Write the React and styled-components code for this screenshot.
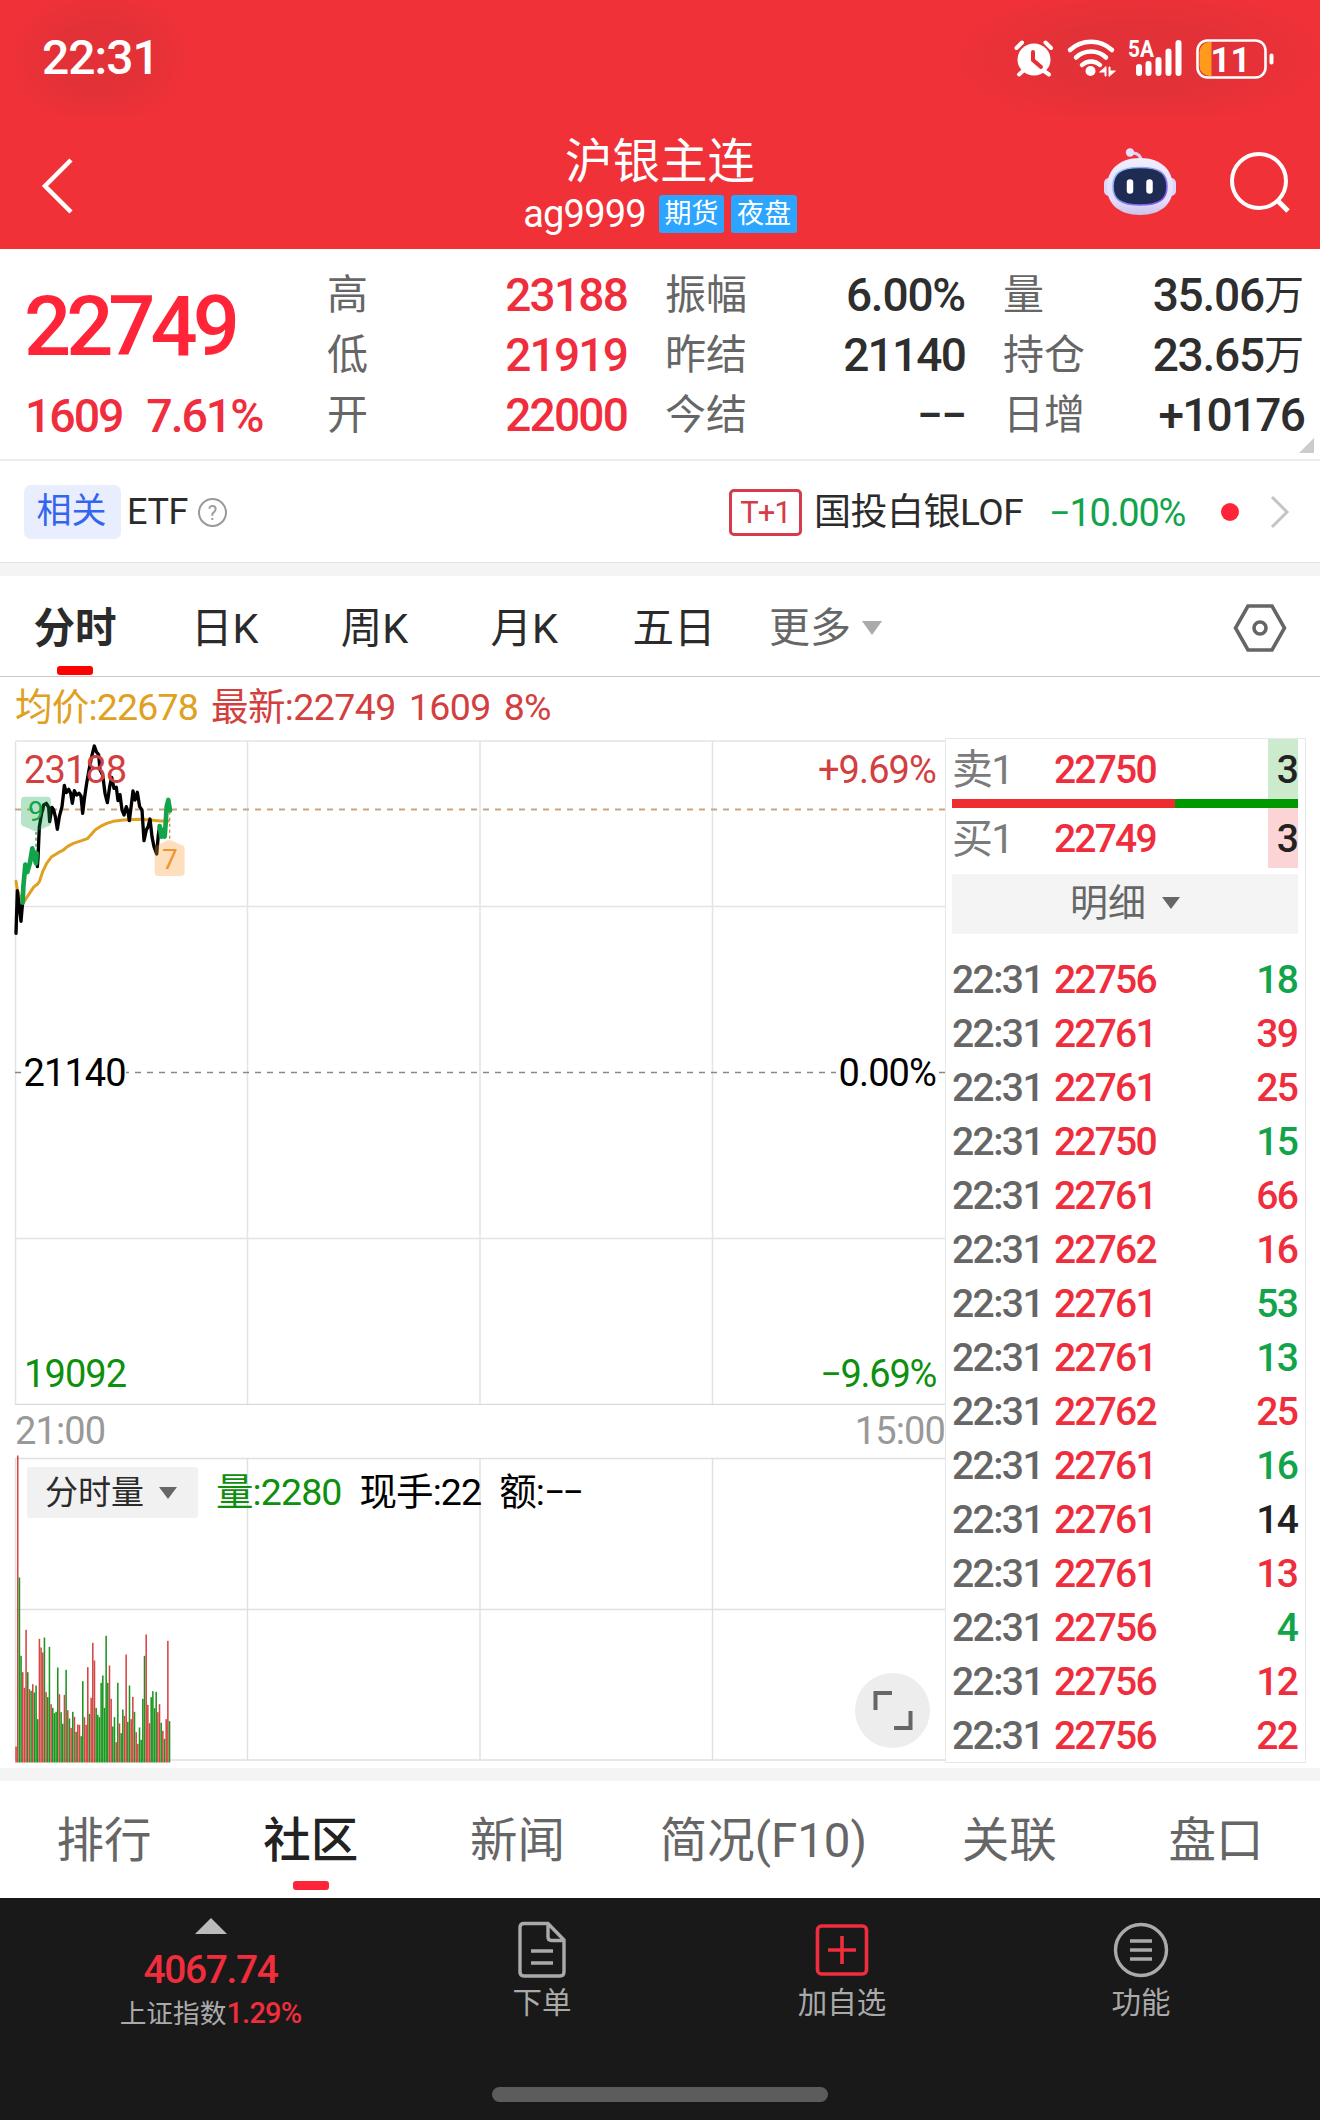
import React from 'react';
import styled, { createGlobalStyle } from 'styled-components';

const GlobalStyle = createGlobalStyle`
	body {
		background: #fff;
		color: #2b2b2b;
		font-family: Roboto, "Noto Sans CJK SC", sans-serif;
		margin: 0;
	}
`;

const RED = '#f02d3c';
const GREEN = '#12a44b';

const Screen = styled.div`
	display: flex;
	flex-direction: column;
	height: 2120px;
	overflow: hidden;
	width: 1320px;
`;

const Header = styled.header`
	background: #f03138;
	color: #fff;
	height: 249px;
`;

const StatusBar = styled.div`
	align-items: center;
	background:
		radial-gradient(ellipse 92px 72px at 100px 58px, rgba(60, 50, 50, 0.08) 45%, transparent 100%),
		radial-gradient(ellipse 190px 72px at 1140px 58px, rgba(60, 50, 50, 0.08) 45%, transparent 100%);
	box-sizing: border-box;
	display: flex;
	height: 116px;
	justify-content: space-between;
	padding: 0 46px 0 42px;
`;

const Clock = styled.div`
	font-size: 48px;
	font-weight: 500;
	letter-spacing: -1px;
	line-height: 114px;
`;

const StatusIcons = styled.svg`
	display: block;
	height: 44px;
	width: 262px;
`;

const NavBar = styled.div`
	display: grid;
	grid-template-columns: 1fr auto 1fr;
	height: 133px;
`;

const NavSide = styled.div`
	align-items: center;
	display: flex;
	gap: 53px;
	justify-content: ${props => props.$end ? 'flex-end' : 'flex-start'};
	padding: ${props => props.$end ? '0 29px 2px 0' : '6px 0 0 40px'};
`;

const TitleBlock = styled.div`
	align-items: center;
	display: flex;
	flex-direction: column;
	padding-top: 21px;
`;

const Title = styled.div`
	font-size: 47.5px;
	line-height: 50px;
`;

const SubTitle = styled.div`
	align-items: center;
	display: flex;
	gap: 7px;
	height: 50px;
	margin-top: 2px;
`;

const Code = styled.span`
	font-size: 38px;
	letter-spacing: -0.8px;
	margin-right: 6px;
`;

const Tag = styled.span`
	background: #2ba5ff;
	border-radius: 3px;
	font-size: 27px;
	height: 38px;
	line-height: 39px;
	text-align: center;
	width: 65.5px;
`;

const Quote = styled.section`
	border-bottom: 2px solid #ececec;
	box-sizing: border-box;
	display: grid;
	gap: 38px;
	grid-template-columns: 289px 300px 300px 301px;
	height: 212px;
	position: relative;
`;

const PriceBlock = styled.div`
	color: ${RED};
	font-weight: 500;
	padding: 37px 0 0 24px;
	white-space: nowrap;
`;

const Price = styled.div`
	color: #ff2437;
	font-size: 83px;
	letter-spacing: -5px;
	line-height: 81px;
`;

const Change = styled.div`
	display: flex;
	font-size: 46.5px;
	gap: 24px;
	letter-spacing: -2.1px;
	line-height: 60px;
	margin-top: 19px;
	padding-left: 1px;
`;

const Stats = styled.dl`
	margin: 0;
	padding-top: 16px;
`;

const Stat = styled.div`
	display: flex;
	height: 60px;
	justify-content: space-between;
	line-height: 60px;
`;

const StatName = styled.dt`
	color: #666;
	font-size: 41px;
`;

const StatValue = styled.dd`
	color: ${props => props.$red ? RED : '#2e2e2e'};
	font-size: 46px;
	font-weight: 500;
	letter-spacing: ${props => props.$decimal ? '-1.2px' : '-1.8px'};
	margin: 0;
`;

const Unit = styled.span`
	display: inline-block;
	font-size: 40px;
	font-weight: 400;
	letter-spacing: 0;
	line-height: 56px;
	vertical-align: 2px;
`;

const Corner = styled.i`
	border-bottom: 15px solid #ccc;
	border-left: 15px solid transparent;
	bottom: 6px;
	position: absolute;
	right: 6px;
`;

const Related = styled.section`
	align-items: center;
	border-bottom: 1px solid #e2e2e2;
	box-sizing: border-box;
	display: flex;
	font-size: 36px;
	height: 102px;
	padding: 2px 30px 0 24px;
`;

const RelatedTag = styled.span`
	background: #e9eeff;
	border-radius: 7px;
	color: #3565ef;
	font-size: 35px;
	height: 54px;
	line-height: 54px;
	text-align: center;
	text-indent: -2px;
	width: 97px;
`;

const EtfName = styled.span`
	letter-spacing: -0.4px;
	margin: 0 10px 0 6px;
`;

const HelpMark = styled.span`
	border: 2px solid #999;
	border-radius: 50%;
	box-sizing: border-box;
	color: #999;
	font-size: 20px;
	height: 29px;
	line-height: 26px;
	text-align: center;
	width: 29px;
`;

const TPlus = styled.span`
	border: 3px solid #d33c48;
	border-radius: 5px;
	box-sizing: border-box;
	color: #d33c48;
	font-size: 31px;
	height: 47px;
	letter-spacing: -1px;
	line-height: 41px;
	margin-left: auto;
	text-align: center;
	width: 73px;
`;

const FundName = styled.span`
	font-size: 37px;
	letter-spacing: -0.5px;
	line-height: 50px;
	margin: 2px 0 0 12px;
`;

const FundChange = styled.span`
	color: ${GREEN};
	font-size: 38px;
	letter-spacing: -1.3px;
	margin: 1px 36px 0 26px;
`;

const Dot = styled.i`
	background: #ff2437;
	border-radius: 50%;
	height: 18px;
	margin-right: 31px;
	width: 18px;
`;

const Band = styled.div`
	background: #f4f4f4;
	height: 13px;
`;

const Periods = styled.nav`
	align-items: center;
	border-bottom: 1px solid #c8c8c8;
	box-sizing: border-box;
	display: flex;
	height: 101px;
	padding: 5px 33px 0 0;
`;

const Period = styled.div`
	font-size: 41.5px;
	font-weight: ${props => props.$active ? 700 : 400};
	line-height: 95px;
	position: relative;
	text-align: center;
	width: 149.8px;
`;

const Underline = styled.i`
	background: ${props => props.$color};
	border-radius: 3px;
	bottom: ${props => props.$bottom};
	height: 9px;
	left: calc(50% - 18px);
	position: absolute;
	width: 36px;
`;

const More = styled.div`
	align-items: center;
	color: #666;
	display: flex;
	flex: 1;
	font-size: 41px;
	gap: 11px;
	line-height: 95px;
	padding-left: 20px;
`;

const Triangle = styled.i`
	border: ${props => props.$size || 9}px solid transparent;
	border-bottom: 0;
	border-top: ${props => props.$height || 12}px solid ${props => props.$color || '#666'};
`;

const InfoLine = styled.div`
	color: #d33f3f;
	display: flex;
	font-size: 37.5px;
	gap: 13px;
	height: 58px;
	letter-spacing: -0.6px;
	line-height: 60px;
	padding-left: 15px;
`;

const Average = styled.span`
	color: #e0a021;
	letter-spacing: -0.8px;
`;

const Market = styled.section`
	display: flex;
	height: 1034px;
`;

const Charts = styled.div`
	position: relative;
	width: 945px;
`;

const ChartSvg = styled.svg`
	display: block;
	height: ${props => props.$height}px;
	width: 945px;

	text {
		font-family: Roboto, "Noto Sans CJK SC", sans-serif;
		font-size: 38px;
		letter-spacing: -0.9px;
	}
`;

const TimeAxis = styled.div`
	color: #999;
	display: flex;
	font-size: 38px;
	height: 50px;
	justify-content: space-between;
	letter-spacing: -0.9px;
	line-height: 52px;
	padding: 0 0 0 15px;
`;

const VolumeHead = styled.div`
	align-items: center;
	color: #000;
	display: flex;
	font-size: 37.5px;
	gap: 18px;
	left: 27px;
	letter-spacing: -0.9px;
	line-height: 44px;
	position: absolute;
	top: 732px;
`;

const VolumeSelect = styled.div`
	align-items: center;
	background: #f1f1f1;
	border-radius: 3px;
	box-sizing: border-box;
	color: #2b2b2b;
	display: flex;
	font-size: 33px;
	gap: 15px;
	height: 51px;
	letter-spacing: 0;
	padding: 1px 0 0 18px;
	width: 171px;
`;

const VolumeValue = styled.span`
	color: ${props => props.$green ? '#0e8f0e' : '#000'};
`;

const Dashes = styled.span`
	letter-spacing: -3px;
`;

const ExpandButton = styled.div`
	background: #ededed;
	border-radius: 50%;
	bottom: 20px;
	height: 75px;
	position: absolute;
	right: 15px;
	width: 75px;
`;

const Depth = styled.aside`
	border: 1px solid #e8e8e8;
	box-sizing: border-box;
	height: 1025px;
	margin-top: 3px;
	padding: 0 7px 0 6px;
	width: 361px;
`;

const OrderRow = styled.div`
	display: grid;
	font-size: 39px;
	grid-template-columns: 102px 1fr 30px;
	height: 60px;
	letter-spacing: -1.8px;
	line-height: 62px;
`;

const OrderName = styled.span`
	color: #7b7b7b;
	font-size: 41px;
`;

const OrderPrice = styled.span`
	color: ${RED};
	font-weight: 500;
`;

const OrderSize = styled.span`
	background: ${props => props.$bid ? '#fbd5d5' : '#cceacc'};
	box-sizing: border-box;
	color: #222;
	font-weight: 500;
	height: 60px;
	padding-right: 1px;
	text-align: right;
`;

const RatioBar = styled.div`
	background: linear-gradient(to right, #ee2d30 64.5%, #009a00 64.5%);
	height: 9px;
`;

const DetailSelect = styled.div`
	align-items: center;
	background: #f4f4f4;
	box-sizing: border-box;
	color: #666;
	display: flex;
	font-size: 38px;
	gap: 16px;
	height: 60px;
	justify-content: center;
	line-height: 50px;
	margin: 6px 0 19px;
	padding-bottom: 2px;
`;

const TickRow = styled.div`
	display: grid;
	font-size: 39px;
	font-weight: 500;
	grid-template-columns: 102px 1fr auto;
	height: 54px;
	letter-spacing: -1.8px;
	line-height: 54px;
`;

const TickTime = styled.span`
	color: #666;
	letter-spacing: -1.6px;
`;

const tickColors = { r: RED, g: GREEN, k: '#222' };

const TickSize = styled.span`
	color: ${props => tickColors[props.$side]};
	padding-right: 1px;
`;

const Sections = styled.nav`
	display: flex;
	height: 117px;
	justify-content: center;
`;

const SectionTab = styled.div`
	color: ${props => props.$active ? '#222' : '#666'};
	flex: none;
	font-size: 47.5px;
	font-weight: ${props => props.$active ? 500 : 400};
	line-height: 121px;
	position: relative;
	text-align: center;
	width: ${props => props.$wide ? '285px' : '206.8px'};
`;

const Toolbar = styled.footer`
	background: #191919;
	box-sizing: border-box;
	color: #aaa;
	display: grid;
	grid-template-columns: 363px 300px 300px 298px;
	height: 222px;
	padding-left: 29px;
	position: relative;
`;

const ToolItem = styled.div`
	align-items: center;
	display: flex;
	flex-direction: column;
	font-size: 29.5px;
	line-height: 46px;
	padding-top: 20px;

	svg {
		display: block;
		height: 62px;
		width: 62px;
	}
`;

const IndexItem = styled(ToolItem)`
	font-size: 26.7px;
	line-height: 38px;
`;

const UpTriangle = styled.i`
	border: 16px solid transparent;
	border-bottom-color: #bbb;
	border-top: 0;
`;

const IndexValue = styled.div`
	color: ${RED};
	font-size: 39px;
	font-weight: 500;
	letter-spacing: -1.4px;
	line-height: 40px;
	margin: 16px 0 4px;
`;

const IndexChange = styled.span`
	color: ${RED};
	font-size: 29px;
	font-weight: 500;
	letter-spacing: -0.8px;
`;

const HomeBar = styled.i`
	background: #5c5c5c;
	border-radius: 8px;
	bottom: 18px;
	height: 15px;
	left: 492px;
	position: absolute;
	width: 336px;
`;

const stats = [
	[['高', '23188', true], ['低', '21919', true], ['开', '22000', true]],
	[['振幅', '6.00%'], ['昨结', '21140'], ['今结', '−−']],
	[['量', '35.06', false, '万'], ['持仓', '23.65', false, '万'], ['日增', '+10176']],
];

const ticks = [
	['22756', 18, 'g'],
	['22761', 39, 'r'],
	['22761', 25, 'r'],
	['22750', 15, 'g'],
	['22761', 66, 'r'],
	['22762', 16, 'r'],
	['22761', 53, 'g'],
	['22761', 13, 'g'],
	['22762', 25, 'r'],
	['22761', 16, 'g'],
	['22761', 14, 'k'],
	['22761', 13, 'r'],
	['22756', 4, 'g'],
	['22756', 12, 'r'],
	['22756', 22, 'r'],
];

// lines are plotted on a grid three times finer than the pixels
const openLine = '48,640 52,512 63,604 68,545';
const openRise = '68,548 70,500 76,434 82,456 90,428 97,385 102,412 108,430 110,400';
const mainLine = '112,440 114,415 118,320 125,280 131,255 139,250 146,262 149,305 156,262 161,270 166,290 172,328 178,290 186,260 190,225 193,196 199,218 206,208 212,220 217,250 223,212 230,225 237,220 243,228 248,280 254,230 260,190 267,150 275,110 283,78 289,95 296,104 300,150 308,165 315,220 322,248 329,200 335,172 342,205 349,202 354,242 360,224 366,270 372,285 379,260 384,275 388,302 394,255 399,213 405,240 412,217 419,260 426,270 432,362 439,330 445,318 450,297 456,350 462,380 470,402 475,345 479,318';
const lastRise = '479,318 484,350 489,330 494,350 497,310 500,260 505,240 510,272';
const averageLine = '48,484 52,510 66,548 72,545 80,533 90,518 102,500 112,493 118,485 128,455 140,430 155,410 175,398 190,390 202,380 220,370 245,362 262,356 275,342 285,330 300,320 320,310 340,304 370,300 420,298 450,300 480,303 505,303';

// one entry per minute: direction and height
const volumes = 'r48 r921 g555 g320 r271 r224 r398 g271 r220 g215 r235 g210 g231 g130 r371 r345 r330 g375 r211 g196 g347 r175 g164 g148 g152 g285 r205 g151 g116 r203 g278 r157 g132 r104 g152 r137 g92 r114 r113 g79 g244 r136 r113 r286 g146 r194 r359 r306 g164 g143 g136 g239 g261 g164 g380 g239 r291 r191 g108 g136 r61 g239 r117 g88 g159 r140 r324 g122 g231 r130 r197 g152 r91 r56 g105 g68 g191 g320 r384 r173 r118 g196 g214 g163 g212 r151 r175 g119 r95 g71 r130 r365 g124'.split(' ');

const StatusDrawing = () => (
	<StatusIcons viewBox="1012 36 262 44" fill="none" stroke="#fff" strokeLinecap="round">
		<ellipse cx="1034" cy="59.500" rx="16.500" ry="16" fill="#fff" stroke="none" />
		<path d="M1016.500 48 l5.500 -5.500 M1045.500 42.500 l5.500 5.500" strokeWidth="4" />
		<path d="M1023 71 l-4 3.500 M1044 71 l5 3.500" strokeWidth="4" />
		<path d="M1033 52 v8 l8 7" stroke="#e82f36" strokeWidth="4" />
		<path d="M1070 50 a31 31 0 0 1 42 0" strokeWidth="4.500" />
		<path d="M1076 57.500 a22 22 0 0 1 30 0" strokeWidth="4.500" />
		<path d="M1082 65 a13 13 0 0 1 18 0" strokeWidth="4.500" />
		<circle cx="1090.500" cy="71" r="5" fill="#fff" stroke="none" />
		<path d="M1106 67 v9 h-1 v-4 h-5 z M1109 76 v-9 h1 v4 h5 z" fill="#fff" strokeWidth="1" />
		<text x="1128" y="57" fill="#fff" stroke="none" fontSize="24" fontWeight="700" textLength="26" lengthAdjust="spacingAndGlyphs">5A</text>
		<path d="M1139 67 v6 M1148.500 64 v9 M1158.500 60 v13 M1168.500 51.500 v21.500 M1178.500 43 v30" strokeWidth="6" />
		<path d="M1211.500 42 h-2 a10 10 0 0 0 -10 10 v14 a10 10 0 0 0 10 10 h2 z" fill="#ff9a1c" stroke="none" />
		<rect x="1197.500" y="40.500" width="68" height="37" rx="10" strokeWidth="2.600" />
		<path d="M1271.500 55.500 v7" strokeWidth="4" />
		<text x="1230.500" y="71.500" fill="#fff" stroke="none" fontSize="35" fontWeight="700" textAnchor="middle">11</text>
	</StatusIcons>
);

const Robot = () => (
	<svg width="74" height="70" viewBox="1103 146 74 70">
		<defs>
			<linearGradient id="shell" x1="0" y1="0" x2="0" y2="1">
				<stop offset="0" stopColor="#f1edff" />
				<stop offset="0.75" stopColor="#e4ddfb" />
				<stop offset="1" stopColor="#c9c2ea" />
			</linearGradient>
			<linearGradient id="rim" x1="0" y1="0" x2="1" y2="1">
				<stop offset="0" stopColor="#8fd0ff" />
				<stop offset="1" stopColor="#8447e8" />
			</linearGradient>
		</defs>
		<path d="M1132 152 q9 0 9 8" fill="none" stroke="#d9d2f5" strokeWidth="3" />
		<circle cx="1130" cy="151.500" r="4.200" fill="#e6e0fb" />
		<rect x="1104" y="177" width="10" height="18" rx="5" fill="#dcd6f8" />
		<rect x="1166" y="177" width="10" height="18" rx="5" fill="#dcd6f8" />
		<path d="M1140 157 c22 0 33 13 33 29 c0 17 -12 28 -33 28 s-33 -11 -33 -28 c0 -16 11 -29 33 -29z" fill="url(#shell)" />
		<path d="M1140 166.500 c20 0 27 6 27 19 c0 13 -8 18.500 -27 18.500 s-27 -5.500 -27 -18.500 c0 -13 7 -19 27 -19z" fill="#1e2b52" stroke="url(#rim)" strokeWidth="1.600" />
		<path d="M1130 181.500 v8 M1149.500 181.500 v8" stroke="#fff" strokeWidth="6.500" strokeLinecap="round" />
	</svg>
);

const PriceChart = () => (
	<ChartSvg $height={670} viewBox="0 735 945 670">
		<g stroke="#e4e4e4" strokeWidth="1.5" fill="none">
			<path d="M15.500 741 H945 M15.500 906.500 H945 M15.500 1238.500 H945 M15.500 741 V1404 M247.500 741 V1404 M480 741 V1404 M712.500 741 V1404" />
			<path d="M15 1404.500 H945" stroke="#dadada" />
		</g>
		<path d="M15 1072.500 H945" stroke="#888" strokeWidth="1.400" strokeDasharray="6 6" />
		<path d="M15 809.500 H945" stroke="#c9a67c" strokeWidth="2" strokeDasharray="6 6" />
		<rect x="22" y="1058" width="104" height="30" fill="#fff" />
		<rect x="836" y="1058" width="102" height="30" fill="#fff" />
		<g transform="translate(0 720) scale(0.33333)" fill="none" strokeLinejoin="round" strokeLinecap="round">
			<polyline points={averageLine} stroke="#e0a021" strokeWidth="9" />
			<polyline points={openLine} stroke="#000" strokeWidth="10" />
			<polyline points={mainLine} stroke="#000" strokeWidth="10" />
			<polyline points={openRise} stroke={GREEN} strokeWidth="14" />
			<polyline points={lastRise} stroke={GREEN} strokeWidth="14" />
			<path d="M108 335 V400" stroke="#3d9460" strokeWidth="4" strokeDasharray="9 9" strokeLinecap="butt" />
			<path d="M509 275 V360" stroke="#c08a58" strokeWidth="4" strokeDasharray="9 9" strokeLinecap="butt" />
			<path d="M75 230 h66 q12 0 12 12 v66 q0 10 -12 12 l-28 13 h-10 l-28 -13 q-12 -2 -12 -12 v-66 q0 -12 12 -12z" fill={GREEN} opacity="0.3" />
			<path d="M475 374 l28 -13 h10 l29 13 q12 2 12 12 v70 q0 12 -12 12 h-66 q-12 0 -12 -12 v-70 q0 -10 11 -12z" fill="#fb9a32" opacity="0.32" />
		</g>
		<text x="28" y="820.500" fill="#12a44b" style={{ fontSize: 28 }}>9</text>
		<text x="162" y="869" fill="#f0952e" style={{ fontSize: 28 }}>7</text>
		<text x="24" y="783" fill="#d33f3f">23188</text>
		<text x="936" y="783" fill="#d33f3f" textAnchor="end">+9.69%</text>
		<text x="23.500" y="1086" fill="#000">21140</text>
		<text x="936" y="1086" fill="#000" textAnchor="end">0.00%</text>
		<text x="24" y="1387" fill="#0e8f0e">19092</text>
		<text x="936" y="1387" fill="#0e8f0e" textAnchor="end" style={{ letterSpacing: -1.3 }}>−9.69%</text>
	</ChartSvg>
);

const VolumeChart = () => (
	<ChartSvg $height={309} viewBox="0 1455 945 309">
		<path d="M15.500 1458.500 H945 M15.500 1609.500 H945 M15.500 1760 H945 M15.500 1458 V1760 M247.500 1458 V1760 M480 1458 V1760 M712.500 1458 V1760" stroke="#e0e0e0" strokeWidth="1.400" />
		{volumes.map((item, i) => {
			const height = item.slice(1) / 3;
			return (
				<rect
					key={i}
					x={15.300 + i * 1.668}
					y={1762.500 - height}
					width="1.550"
					height={height}
					fill={item[0] === 'r' ? '#d64545' : '#1a961f'}
				/>
			);
		})}
	</ChartSvg>
);

const App = () => (
	<Screen>
		<GlobalStyle />
		<Header>
			<StatusBar>
				<Clock>22:31</Clock>
				<StatusDrawing />
			</StatusBar>
			<NavBar>
				<NavSide>
					<svg width="34" height="58" viewBox="0 0 34 58" fill="none" stroke="#fff" strokeWidth="4.500">
						<path d="M31 3 L5 29 L31 55" />
					</svg>
				</NavSide>
				<TitleBlock>
					<Title>沪银主连</Title>
					<SubTitle>
						<Code>ag9999</Code>
						<Tag>期货</Tag>
						<Tag>夜盘</Tag>
					</SubTitle>
				</TitleBlock>
				<NavSide $end>
					<Robot />
					<svg width="61" height="62" viewBox="0 0 61 62" fill="none" stroke="#fff" strokeWidth="4">
						<circle cx="29" cy="30" r="27" />
						<path d="M47 49 L58 60" strokeWidth="5" />
					</svg>
				</NavSide>
			</NavBar>
		</Header>

		<Quote>
			<PriceBlock>
				<Price>22749</Price>
				<Change>
					<span>1609</span>
					<span>7.61%</span>
				</Change>
			</PriceBlock>
			{stats.map((column, i) => (
				<Stats key={i}>
					{column.map(([name, value, red, unit]) => (
						<Stat key={name}>
							<StatName>{name}</StatName>
							<StatValue $red={red} $decimal={value.includes('.')}>{value}{unit ? <Unit>{unit}</Unit> : ''}</StatValue>
						</Stat>
					))}
				</Stats>
			))}
			<Corner />
		</Quote>

		<Related>
			<RelatedTag>相关</RelatedTag>
			<EtfName>ETF</EtfName>
			<HelpMark>?</HelpMark>
			<TPlus>T+1</TPlus>
			<FundName>国投白银LOF</FundName>
			<FundChange>−10.00%</FundChange>
			<Dot />
			<svg width="20" height="34" viewBox="0 0 20 34" fill="none" stroke="#c4c4c4" strokeWidth="3">
				<path d="M2 2 L17 17 L2 32" />
			</svg>
		</Related>
		<Band />

		<Periods>
			<Period $active>分时<Underline $color="#fd0000" $bottom="1px" /></Period>
			<Period>日K</Period>
			<Period>周K</Period>
			<Period>月K</Period>
			<Period>五日</Period>
			<More>更多<Triangle $size={10} $height={14} $color="#aaa" /></More>
			<svg width="54" height="48" viewBox="0 0 54 48" fill="none" stroke="#666" strokeWidth="3.600">
				<path d="M15 2 H39 L51.500 24 L39 46 H15 L2.500 24 Z" />
				<circle cx="27" cy="24" r="6" />
			</svg>
		</Periods>

		<InfoLine>
			<Average>均价:22678</Average>
			<span>最新:22749</span>
			<span>1609</span>
			<span>8%</span>
		</InfoLine>

		<Market>
			<Charts>
				<PriceChart />
				<TimeAxis>
					<span>21:00</span>
					<span>15:00</span>
				</TimeAxis>
				<VolumeChart />
				<VolumeHead>
					<VolumeSelect>分时量<Triangle /></VolumeSelect>
					<VolumeValue $green>量:2280</VolumeValue>
					<VolumeValue>现手:22</VolumeValue>
					<VolumeValue>额:<Dashes>−−</Dashes></VolumeValue>
				</VolumeHead>
				<ExpandButton>
					<svg width="75" height="75" viewBox="0 0 75 75" fill="none" stroke="#666" strokeWidth="4">
						<path d="M20.500 37 V20 H37 M39 55 H55.500 V38" />
					</svg>
				</ExpandButton>
			</Charts>
			<Depth>
				<OrderRow>
					<OrderName>卖1</OrderName>
					<OrderPrice>22750</OrderPrice>
					<OrderSize>3</OrderSize>
				</OrderRow>
				<RatioBar />
				<OrderRow>
					<OrderName>买1</OrderName>
					<OrderPrice>22749</OrderPrice>
					<OrderSize $bid>3</OrderSize>
				</OrderRow>
				<DetailSelect>明细<Triangle /></DetailSelect>
				{ticks.map(([price, size, side], i) => (
					<TickRow key={i}>
						<TickTime>22:31</TickTime>
						<OrderPrice>{price}</OrderPrice>
						<TickSize $side={side}>{size}</TickSize>
					</TickRow>
				))}
			</Depth>
		</Market>
		<Band />

		<Sections>
			<SectionTab>排行</SectionTab>
			<SectionTab $active>社区<Underline $color="#ff2437" $bottom="8px" /></SectionTab>
			<SectionTab>新闻</SectionTab>
			<SectionTab $wide>简况(F10)</SectionTab>
			<SectionTab>关联</SectionTab>
			<SectionTab>盘口</SectionTab>
		</Sections>

		<Toolbar>
			<IndexItem>
				<UpTriangle />
				<IndexValue>4067.74</IndexValue>
				<div>上证指数<IndexChange>1.29%</IndexChange></div>
			</IndexItem>
			<ToolItem>
				<svg viewBox="0 0 62 62" fill="none" stroke="#aaa" strokeWidth="3.400">
					<path d="M13 5.500 H37 L53 22 V54 Q53 58 49 58 H13 Q9 58 9 54 V9.500 Q9 5.500 13 5.500 Z M37 6 V19 Q37 22.500 40.500 22.500 H53 M20 33 H42 M20 45 H42" />
				</svg>
				<div>下单</div>
			</ToolItem>
			<ToolItem>
				<svg viewBox="0 0 62 62" fill="none" stroke={RED} strokeWidth="3.600">
					<rect x="6.500" y="8" width="49" height="48" rx="4" />
					<path d="M31 18 V46 M17 32 H45" />
				</svg>
				<div>加自选</div>
			</ToolItem>
			<ToolItem>
				<svg viewBox="0 0 62 62" fill="none" stroke="#aaa" strokeWidth="3.400">
					<circle cx="31" cy="32" r="25.500" />
					<path d="M20 23 H42 M20 32 H42 M20 41 H42" />
				</svg>
				<div>功能</div>
			</ToolItem>
			<HomeBar />
		</Toolbar>
	</Screen>
);

export default App;
